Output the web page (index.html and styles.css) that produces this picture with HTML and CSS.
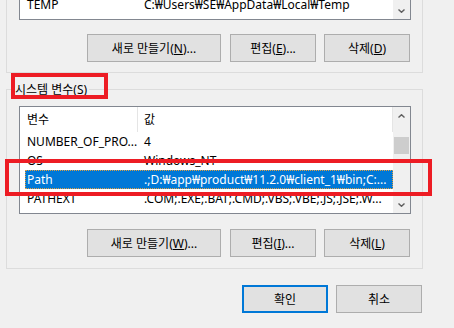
FILE: index.html
```html
<!DOCTYPE html>
<html lang="ko">
<head>
<meta charset="utf-8">
<link rel="stylesheet" href="styles.css">
</head>
<body>
<div class="dialog">
  <div class="group1">
    <div class="list list1">
      <div class="rows">
        <div class="row top-row"><span>TEMP</span><span>C:₩Users₩SE₩AppData₩Local₩Temp</span></div>
      </div>
      <div class="sb">
        <div class="sb-btn sb-bottom">
          <svg width="7" height="4" viewBox="0 0 7 4"><path d="M0.5 0.5 L3.5 3.3 L6.5 0.5" fill="none" stroke="#606060" stroke-width="1.4"/></svg>
        </div>
      </div>
    </div>
    <div class="btnrow">
      <button class="btn wide">새로 만들기(<u>N</u>)...</button>
      <button class="btn">편집(<u>E</u>)...</button>
      <button class="btn">삭제(<u>D</u>)</button>
    </div>
  </div>

  <fieldset class="group2">
    <legend>시스템 변수(<u>S</u>)</legend>
    <div class="list list2">
      <div class="rows">
        <div class="hdr"><div class="h1">변수</div><div class="h2">값</div></div>
        <div class="row"><span>NUMBER_OF_PRO...</span><span>4</span></div>
        <div class="row"><span>OS</span><span>Windows_NT</span></div>
        <div class="row sel"><span>Path</span><span>.;D:₩app₩product₩11.2.0₩client_1₩bin;C:...</span></div>
        <div class="row"><span>PATHEXT</span><span>.COM;.EXE;.BAT;.CMD;.VBS;.VBE;.JS;.JSE;.W...</span></div>
      </div>
      <div class="sb">
        <div class="sb-btn">
          <svg width="7" height="4" viewBox="0 0 7 4"><path d="M0.5 3.5 L3.5 0.7 L6.5 3.5" fill="none" stroke="#606060" stroke-width="1.4"/></svg>
        </div>
        <div class="track"><div class="thumb"></div></div>
        <div class="sb-btn">
          <svg width="7" height="4" viewBox="0 0 7 4"><path d="M0.5 0.5 L3.5 3.3 L6.5 0.5" fill="none" stroke="#606060" stroke-width="1.4"/></svg>
        </div>
      </div>
    </div>
    <div class="btnrow btnrow2">
      <button class="btn wide">새로 만들기(<u>W</u>)...</button>
      <button class="btn">편집(<u>I</u>)...</button>
      <button class="btn">삭제(<u>L</u>)</button>
    </div>
  </fieldset>

  <div class="footer">
    <button class="btn default">확인</button>
    <button class="btn">취소</button>
  </div>

  <div class="mark mark1"></div>
  <div class="mark mark2"></div>
</div>
</body>
</html>
```

FILE: styles.css
```css
* { box-sizing: border-box; }
html, body { margin: 0; padding: 0; }
body {
  background: #f0f0f0;
  font-family: "Noto Sans", "Noto Sans CJK KR", sans-serif;
  font-size: 12px;
  color: #000;
  width: 454px;
  height: 328px;
  overflow: hidden;
}
.dialog {
  position: relative;
  padding-left: 6px;
  width: 424px;
}
.group1 {
  width: 417px;
  height: 73px;
  border: 1px solid #dcdcdc;
  border-top: none;
  padding: 0 0 10px 12px;
}
.list {
  width: 392px;
  border: 1px solid #828790;
  background: #fff;
  display: flex;
  overflow: hidden;
}
.list1 { height: 20px; border-top: none; }
.list2 { height: 108px; margin: 8px 0 0 12px; }
.rows { flex: 1; overflow: hidden; min-width: 0; }
.row {
  display: grid;
  grid-template-columns: 117px auto;
  margin-left: 5px;
  padding-left: 2px;
  height: 19px;
  line-height: 19px;
  white-space: nowrap;
}
.top-row { margin-top: -5px; }
.sel {
  background: #0078d7;
  color: #fff;
  outline: 1px dotted #e0a040;
  outline-offset: -1px;
}
.hdr {
  display: flex;
  height: 25px;
  line-height: 25px;
  border-right: 1px solid #e5e5e5;
}
.h1 {
  width: 118px;
  padding-left: 7px;
  border-right: 1px solid #e5e5e5;
}
.h2 { padding-left: 6px; }
.sb {
  width: 17px;
  flex: none;
  background: #f0f0f0;
  display: flex;
  flex-direction: column;
}
.sb-btn {
  height: 17px;
  flex: none;
  display: flex;
  align-items: center;
  justify-content: center;
}
.sb-bottom { margin-top: auto; }
.sb-btn svg { display: block; }
.track { flex: 1; }
.thumb {
  margin: 13px 1px 0 1px;
  height: 17px;
  background: #cdcdcd;
}
.btnrow {
  display: flex;
  justify-content: flex-end;
  gap: 8px;
  width: 392px;
  padding-right: 1px;
  margin-top: 14px;
}
.btnrow2 { margin: 15px 0 0 12px; }
.btn {
  height: 28px;
  width: 86px;
  border: 1px solid #adadad;
  background: #e1e1e1;
  font: inherit;
  color: #000;
  padding: 0;
  margin: 0;
  display: flex;
  align-items: center;
  justify-content: center;
  white-space: nowrap;
}
.btn.wide { width: 134px; margin-right: 1px; }
.btn.default { border: 2px solid #0078d7; }
u { text-underline-offset: 1px; }
.group2 {
  margin: 8px 0 0 0;
  padding: 0 0 11px 0;
  border: 1px solid #dcdcdc;
  width: 417px;
  min-width: 0;
}
.group2 legend {
  margin-left: 6px;
  padding: 0 2px;
  height: 17px;
  line-height: 17px;
}
.footer {
  display: flex;
  justify-content: flex-end;
  gap: 8px;
  width: 416px;
  margin-top: 16px;
}
.mark {
  position: absolute;
  border: 4px solid #ed1c24;
}
.mark1 { left: 11px; top: 73px; width: 97px; height: 26px; }
.mark2 { left: 5px; top: 159px; width: 427px; height: 37px; }
```
